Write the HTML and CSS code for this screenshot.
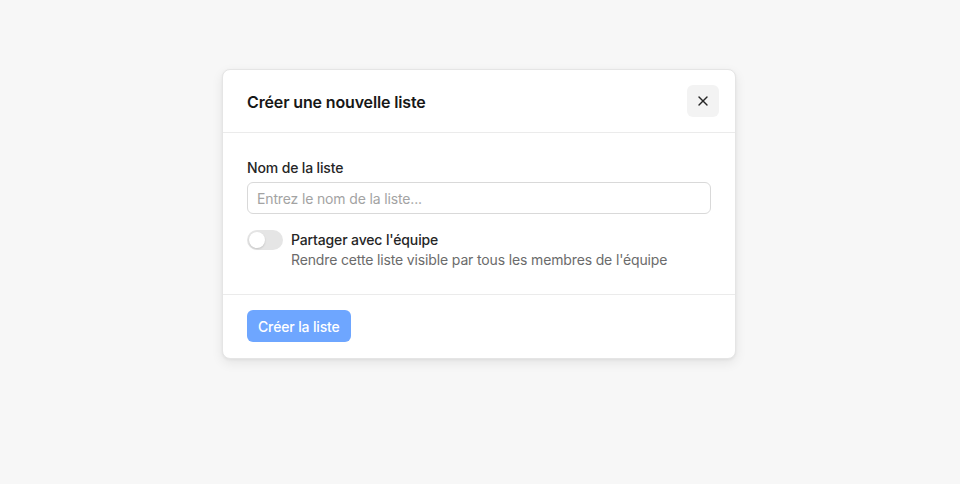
FILE: index.html
```html
<!DOCTYPE html>
<html lang="fr">
<head>
<meta charset="utf-8">
<title>Créer une nouvelle liste</title>
<link rel="stylesheet" href="styles.css">
</head>
<body>
<div class="page">
  <div class="modal">
    <div class="modal-header">
      <h2 class="modal-title">Créer une nouvelle liste</h2>
      <button class="close-btn" aria-label="Fermer">
        <svg width="16" height="16" viewBox="0 0 24 24" fill="none" stroke="currentColor" stroke-width="2" stroke-linecap="round" stroke-linejoin="round"><path d="M18 6 6 18"/><path d="m6 6 12 12"/></svg>
      </button>
    </div>
    <div class="modal-body">
      <label class="field-label" for="name">Nom de la liste</label>
      <input id="name" class="text-input" type="text" placeholder="Entrez le nom de la liste...">
      <div class="toggle-row">
        <span class="toggle"><span class="knob"></span></span>
        <div class="toggle-text">
          <div class="toggle-title">Partager avec l'équipe</div>
          <div class="toggle-desc">Rendre cette liste visible par tous les membres de l'équipe</div>
        </div>
      </div>
    </div>
    <div class="modal-footer">
      <button class="primary-btn">Créer la liste</button>
    </div>
  </div>
</div>
</body>
</html>
```
FILE: styles.css
```css
* { box-sizing: border-box; }
html, body { margin: 0; padding: 0; }
body {
  background: #f7f7f7;
  font-family: Inter, "Liberation Sans", sans-serif;
  color: #171717;
  letter-spacing: -0.009em;
}
.page {
  height: 484px;
  display: flex;
  justify-content: center;
  padding: 69px 2px 0 0;
}
.modal {
  width: 514px;
  height: 290px;
  background: #fff;
  border: 1px solid #e5e5e5;
  border-radius: 8px;
  box-shadow: 0 4px 12px rgba(0,0,0,0.08), 0 1px 3px rgba(0,0,0,0.05);
  display: flex;
  flex-direction: column;
}
.modal-header {
  display: flex;
  align-items: center;
  justify-content: space-between;
  padding: 15px 16px 15px 24px;
  border-bottom: 1px solid #ebebeb;
}
.modal-title {
  margin: 0;
  padding-top: 2px;
  font-size: 16px;
  font-weight: 600;
  line-height: 24px;
  color: #171717;
}
.close-btn {
  width: 32px;
  height: 32px;
  border: none;
  border-radius: 6px;
  background: #f3f3f3;
  color: #262626;
  display: flex;
  align-items: center;
  justify-content: center;
  padding: 0;
}
.modal-body {
  padding: 25px 24px 24px;
  display: flex;
  flex-direction: column;
  border-bottom: 1px solid #ebebeb;
}
.field-label {
  font-size: 14px;
  line-height: 20px;
  font-weight: 500;
  color: #262626;
  margin-bottom: 4px;
}
.text-input {
  width: 464px;
  height: 32px;
  border: 1px solid #d9d9d9;
  border-radius: 6px;
  padding: 0 9px;
  font-family: inherit;
  font-size: 14px;
  letter-spacing: inherit;
  color: #171717;
  background: #fff;
}
.text-input::placeholder { color: #a3a3a3; }
.toggle-row {
  display: flex;
  gap: 8px;
  margin-top: 16px;
}
.toggle {
  width: 36px;
  height: 20px;
  border-radius: 10px;
  background: #e5e5e5;
  position: relative;
  flex-shrink: 0;
}
.knob {
  position: absolute;
  left: 2px;
  top: 2px;
  width: 16px;
  height: 16px;
  border-radius: 50%;
  background: #fff;
  box-shadow: 0 1px 2px rgba(0,0,0,0.15);
}
.toggle-title {
  font-size: 14px;
  line-height: 20px;
  font-weight: 500;
  color: #262626;
}
.toggle-desc {
  font-size: 14px;
  line-height: 20px;
  color: #6b6b6b;
}
.modal-footer {
  padding: 15px 24px;
  display: flex;
}
.primary-btn {
  height: 32px;
  padding: 0 11px;
  border: none;
  border-radius: 6px;
  background: #6ea6ff;
  color: #fff;
  font-family: inherit;
  font-size: 14px;
  font-weight: 500;
  letter-spacing: inherit;
}
```
